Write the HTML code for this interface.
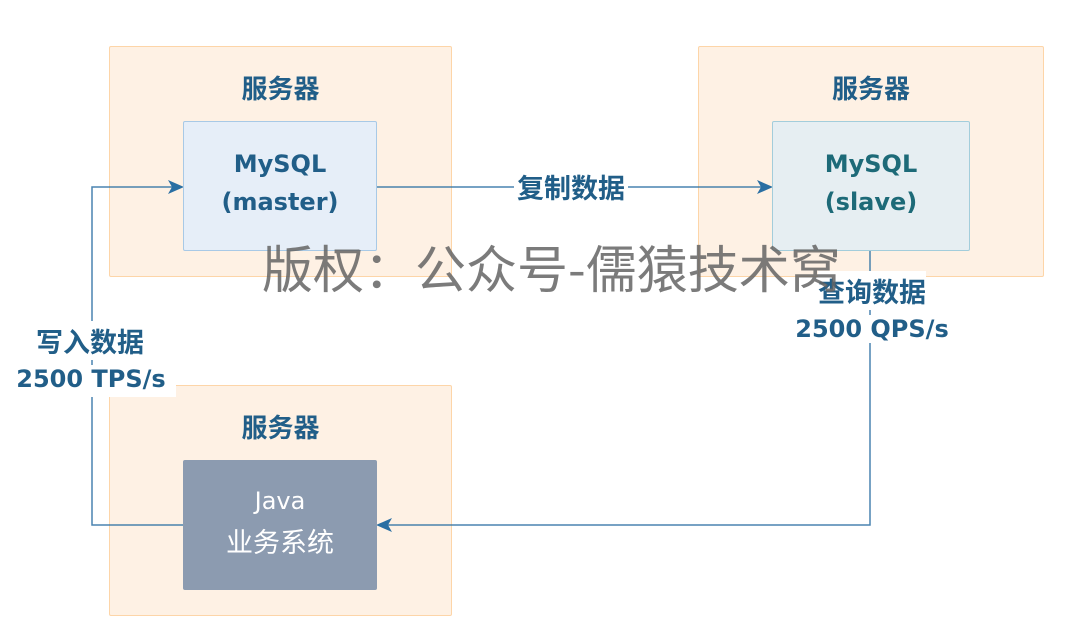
<!DOCTYPE html>
<html><head><meta charset="utf-8"><style>
body{margin:0;width:1081px;height:630px;background:#fff;position:relative;overflow:hidden;font-family:"DejaVu Sans","Noto Sans CJK SC",sans-serif;}
.abs{position:absolute}
.srv{position:absolute;background:#fef1e4;border:1.5px solid #fdd5a8;box-sizing:border-box;border-radius:2px}
.t{position:absolute;color:#215e88;font-weight:bold;text-align:center;white-space:nowrap;line-height:1}
.cj{font-family:"Noto Sans CJK SC",sans-serif;}
.box{position:absolute;box-sizing:border-box;border-radius:2px;text-align:center}
.ln{position:absolute;left:0;right:0;text-align:center;white-space:nowrap;line-height:1}
</style></head><body>
<div class="srv" style="left:109px;top:46px;width:343px;height:231px"></div>
<div class="srv" style="left:698px;top:46px;width:346px;height:231px"></div>
<div class="srv" style="left:109px;top:385px;width:343px;height:231px"></div>
<div class="t cj" style="left:109px;width:343px;top:75px;font-size:26px">服务器</div>
<div class="t cj" style="left:698px;width:346px;top:75px;font-size:26px">服务器</div>
<div class="t cj" style="left:109px;width:343px;top:414px;font-size:26px">服务器</div>
<svg class="abs" style="left:0;top:0" width="1081" height="630">
<g stroke="#2a6fa3" stroke-width="1.5" fill="none" opacity="0.85">
<polyline points="183,525 92,525 92,187 176,187"/>
<line x1="376" y1="187" x2="766" y2="187"/>
<polyline points="870,250 870,525 384,525"/>
</g>
<g fill="#2a6fa3">
<polygon points="184,187 168,180 172,187 168,194"/>
<polygon points="773,187 757,180 761,187 757,194"/>
<polygon points="376,525 392,518 388,525 392,532"/>
</g>
</svg>
<div class="box" style="left:183px;top:121px;width:194px;height:130px;background:#e6eef8;border:1.5px solid #a8c9e6;color:#215e88;font-weight:bold;font-size:24px">
<div class="ln" style="top:30px">MySQL</div><div class="ln" style="top:68px">(master)</div></div>
<div class="box" style="left:772px;top:121px;width:198px;height:130px;background:#e6eef2;border:1.5px solid #a3cddb;color:#1d6a78;font-weight:bold;font-size:24px">
<div class="ln" style="top:30px">MySQL</div><div class="ln" style="top:68px">(slave)</div></div>
<div class="box" style="left:183px;top:460px;width:194px;height:130px;background:#8c9bb0;color:#fff;font-size:24px">
<div class="ln" style="top:29px">Java</div><div class="ln cj" style="top:67px;font-size:27px">业务系统</div></div>
<div class="t cj" style="left:514px;top:173px;font-size:27px;background:#fff;padding:0 3px">复制数据</div>
<div class="t cj" style="left:10px;top:327px;width:160px;font-size:27px"><span style="background:#fff">写入数据</span></div>
<div class="t" style="left:6px;top:365px;width:170px;font-size:24px;background:#fff;padding:2px 0 6px">2500 TPS/s</div>
<div class="t cj" style="left:792px;top:277px;width:160px;font-size:27px"><span style="background:#fff">查询数据</span></div>
<div class="t" style="left:787px;top:317px;width:170px;font-size:24px"><span style="background:#fff">2500 QPS/s</span></div>
<div class="abs" style="left:262px;top:238px;font-size:51px;line-height:1.1;color:rgba(100,100,100,0.85);white-space:nowrap;font-family:'Noto Sans CJK SC',sans-serif">版权：公众号-儒猿技术窝</div>
</body></html>
